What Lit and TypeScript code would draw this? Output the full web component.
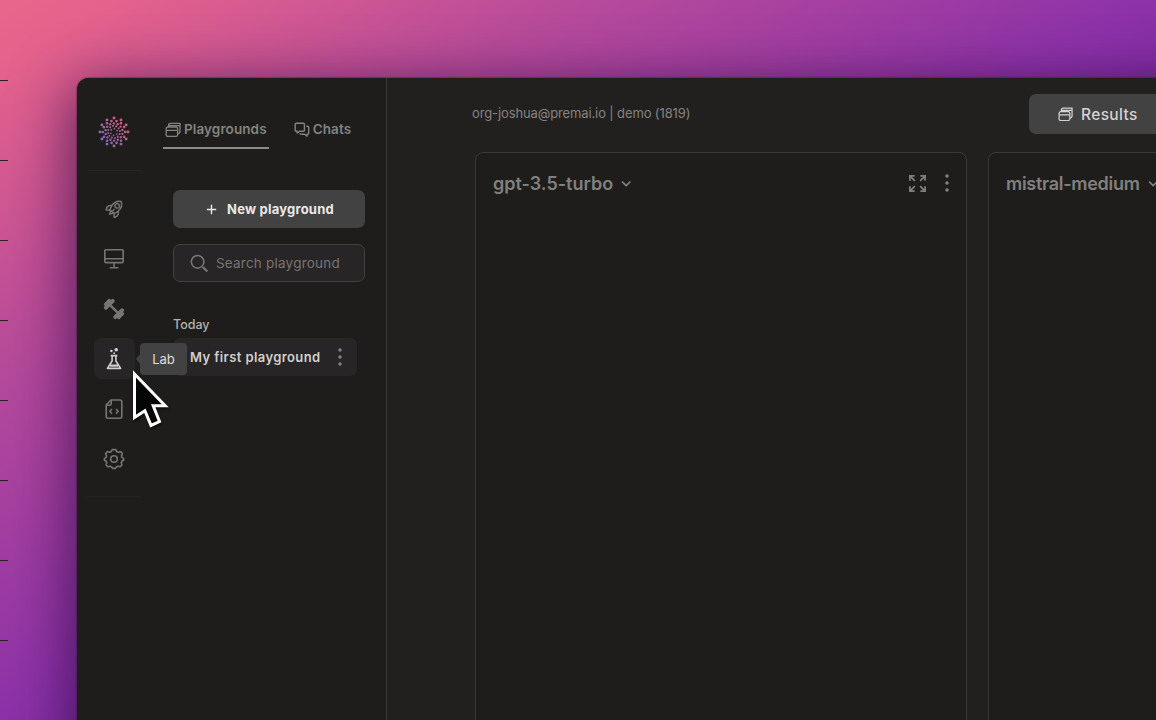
import { LitElement, html, css, svg } from "lit";
import { customElement } from "lit/decorators.js";

const windows = svg`<g stroke-width="1.3"><path d="M3.6 4.8V3.2C3.6 2 4.3 1.3 5.5 1.3H15V9.6C15 10.8 14.3 11.6 12.8 11.6"/><rect x="1.2" y="5" width="11.4" height="9.4" rx="1.6"/><path d="M1.2 8.4H12.6M4 3.6H15"/></g>`;

const railIcons = [
  svg`<g transform="translate(0.8 -0.4) rotate(42 12 12)"><path d="M12 1.6C16 3.6 17.2 7.4 16.6 11.4L15.2 16.4H8.8L7.4 11.4C6.8 7.4 8 3.6 12 1.6Z"/><circle cx="12" cy="8" r="2.4"/><path d="M7.6 11L5.2 13.8C4.4 15.6 4.7 18 6.2 19.4L9.2 16.4M16.4 11L18.8 13.8C19.6 15.6 19.3 18 17.8 19.4L14.8 16.4M10 16.4L12 20.4L14 16.4M12 12.4V15.4"/></g>`,
  svg`<rect x="2.8" y="2.8" width="18.4" height="12.8" rx="1"/><path d="M3 11.7H21.2M12 16V20.6M7.8 20.8H16.4"/>`,
  svg`<g transform="rotate(45 12 12)" fill="currentColor" stroke="none"><rect x="5" y="10.7" width="14" height="2.5"/><rect x="3.4" y="5.2" width="3.9" height="13.6" rx="1.8"/><rect x="16.7" y="5.2" width="3.9" height="13.6" rx="1.8"/><rect x="1" y="7.7" width="3.5" height="8.6" rx="1.6"/><rect x="19.5" y="7.7" width="3.5" height="8.6" rx="1.6"/></g>`,
  svg`<path d="M8.7 8.6H15.3M10.1 8.6V14L5.4 21.4H18.6L13.9 14V8.6"/><path d="M8 18.6H16" stroke-width="2.2"/><g fill="currentColor" stroke="none"><circle cx="14.2" cy="2.8" r="1.8"/><circle cx="9.4" cy="4" r="1.3"/><circle cx="12.2" cy="6.2" r=".9"/></g>`,
  svg`<path d="M9 3H18C19 3 19.8 3.6 19.8 4.7V19.6C19.8 20.6 19.1 21.3 18 21.3H6C4.9 21.3 4.2 20.6 4.2 19.6V8Z"/><path d="M4.2 8.3H7.5C8.6 8.3 9.2 7.7 9.2 6.7V3M10 12L7.8 14.3L10 16.6M14 12L16.2 14.3L14 16.6"/>`,
  svg`<path d="M10.2 2.6H13.8L14.8 4.7L16.4 5.2L18.8 4.6L20.4 6.8L19.4 9.1L19.8 10.4L21.6 11.4V13.2L19.8 14.2L19.3 15.6L19.9 18L18 19.8L15.7 19.3L14.4 19.9L13.2 21.4H10.8L9.6 19.9L8.3 19.3L6 19.8L4.1 18L4.7 15.6L4.2 14.2L2.4 13.2V11.4L4.2 10.4L4.6 9.1L3.6 6.8L5.2 4.6L7.6 5.2L9.2 4.7Z"/><circle cx="12" cy="12" r="3.3"/>`,
];

@customElement("app-root")
export class AppRoot extends LitElement {
  static styles = css`
    :host { display: block; height: 720px; overflow: hidden; font-family: Inter, "Liberation Sans", sans-serif; color: #8a8886; }
    * { box-sizing: border-box; }
    svg { display: block; flex: none; fill: none; stroke: currentColor; stroke-width: 1.4; stroke-linejoin: round; }
    .stage { position: relative; height: 720px; padding: 78px 0 0 77px; overflow: hidden;
      background: linear-gradient(to bottom right, #e9668b 0%, #e4628c 5%, #ba4c9a 24%, #8d32a9 50%, #6d2199 68%); }
    .ticks { position: absolute; left: 0; top: 0; width: 8px; padding-top: 1px; }
    .tick { height: 1px; margin-top: 79px; background: #2b2024; }
    .window { display: flex; width: 1300px; height: 900px; border-radius: 12px 0 0 0; background: #21201e; box-shadow: 0 14px 60px 6px rgba(28, 4, 50, .62), 0 0 2px #281a24; }
    .sidebar { display: flex; flex: none; width: 310px; border-right: 1px solid #393836; border-radius: 12px 0 0 0; background: #1e1d1b; }
    .rail { width: 74px; display: flex; flex-direction: column; align-items: center; padding-top: 38px; }
    .rail svg { stroke-width: 1.6; }
    .rail .logo { stroke: none; }
    .sep { width: 54px; height: 1px; background: #242321; margin-top: 22px; }
    .nav { display: flex; flex-direction: column; gap: 9px; padding-top: 17px; }
    .tile { width: 41px; height: 41px; display: grid; place-items: center; border-radius: 7px; color: #777573; }
    .tile.active { background: #272526; color: #d2d0cf; }
    .last { margin-top: 17px; }
    .panel { flex: 1; padding: 39px 21px 0 12px; }
    .tabs { display: flex; gap: 23px; height: 32px; }
    .tab { display: flex; gap: 3px; height: 32px; padding: 0 2px; align-items: flex-start; font-size: 13.5px; font-weight: 600; line-height: 25px; letter-spacing: .1px; white-space: nowrap; color: #858381; }
    .tab svg { margin-top: 5px; }
    .tab.on { border-bottom: 2px solid #8d8b88; }
    .content { padding: 41px 0 0 10px; }
    .new { height: 38px; display: flex; align-items: center; gap: 10px; padding-left: 33px; background: #424242; border-radius: 7px; color: #ebe9e8; font-size: 13px; font-weight: 700; letter-spacing: .22px; white-space: nowrap; }
    .search { height: 38px; margin-top: 16px; display: flex; align-items: center; gap: 7px; padding-left: 16px; border: 1px solid #424140; border-radius: 7px; background: #272526; font-size: 13.5px; letter-spacing: .21px; color: #777573; white-space: nowrap; }
    .today { margin-top: 35px; font-size: 12.5px; line-height: 16px; font-weight: 500; color: #b4b2b0; }
    .item { margin: 5px 8px 0 0; height: 38px; display: flex; align-items: center; justify-content: space-between; padding: 0 14px 0 17px; background: #272526; border-radius: 7px; color: #d2d0cf; font-size: 13px; font-weight: 600; letter-spacing: .41px; white-space: nowrap; }
    .dots { fill: currentColor; stroke: none; color: #858381; }
    .main { flex: 1; }
    .header { height: 74px; padding: 16px 0 0 85px; display: flex; color: #858381; }
    .org { width: 557px; font-size: 13px; line-height: 39px; letter-spacing: -.12px; }
    .results { height: 40px; flex: 1; display: flex; align-items: center; gap: 8px; padding-left: 29px; border-radius: 7px; background: #424242; color: #d5d3d2; font-size: 15.5px; font-weight: 500; letter-spacing: .35px; }
    .cards { display: flex; gap: 21px; padding-left: 88px; }
    .card { width: 492px; height: 700px; flex: none; border: 1px solid #3a3937; border-radius: 8px; background: #1e1d1b; display: flex; align-items: flex-start; padding: 18px 16px 0 17px; color: #82807e; }
    .model { font-size: 18px; line-height: 25px; font-weight: 600; white-space: nowrap; }
    .model.tight { letter-spacing: -.28px; }
    .chev { margin: 8px 0 0 7px; }
    .tools { display: flex; gap: 17px; margin: 2px 0 0 auto; align-items: center; }
    .tip { position: absolute; left: 140px; top: 343px; width: 47px; height: 32px; border-radius: 4px; background: #424242; color: #e0dedd; font-size: 13px; line-height: 32px; text-align: center; }
    .tip::before { content: ""; position: absolute; left: -4px; top: 11px; border: 5px solid transparent; border-left: 0; border-right: 4px solid #424242; }
    .cursor { position: absolute; left: 128px; top: 365px; filter: drop-shadow(1px 2px 1px rgba(0,0,0,.55)); }
  `;

  private logo() {
    const out = [];
    const radii = [3.4, 6, 8.6, 11.2, 14];
    for (let r = 0; r < radii.length; r++) {
      const n = [6, 12, 14, 14, 12][r];
      for (let i = 0; i < n; i++) {
        const a = (i / n) * Math.PI * 2 + (r - 4) * 0.23 - Math.PI / 2;
        const x = 16 + Math.cos(a) * radii[r], y = 16 + Math.sin(a) * radii[r];
        const t = Math.max(0, Math.min(1, (x - y + 20) / 40));
        out.push(svg`<circle cx=${x} cy=${y} r=${0.85 + r * 0.16} fill=${`rgb(${130 + t * 75},${105 - t * 13},${185 - t * 65})`} />`);
      }
    }
    return html`<svg class="logo" width="32" height="32">${out}</svg>`;
  }

  private dots() {
    return html`<svg class="dots" width="6" height="20"><circle cx="3" cy="3" r="1.7"/><circle cx="3" cy="10" r="1.7"/><circle cx="3" cy="17" r="1.7"/></svg>`;
  }

  private card(name: string, tight: boolean) {
    return html`<section class="card">
      <span class="model ${tight ? "tight" : ""}">${name}</span>
      <svg class="chev" width="12" height="10"><path d="M2 2.5L6.2 6.7L10.4 2.5" stroke-width="1.7"/></svg>
      <div class="tools">
        <svg width="19" height="19" viewBox="0 0 20 20"><path stroke-width="1.8" stroke-linejoin="miter" d="M2 7V2H7M2 2L7.2 7.2M13 2H18V7M18 2L12.8 7.2M2 13V18H7M2 18L7.2 12.8M13 18H18V13M18 18L12.8 12.8"/></svg>
        ${this.dots()}
      </div>
    </section>`;
  }

  render() {
    return html`<div class="stage">
      <div class="ticks">${Array.from({ length: 8 }, () => html`<div class="tick"></div>`)}</div>
      <div class="window">
        <aside class="sidebar">
          <div class="rail">
            ${this.logo()}
            <div class="sep"></div>
            <nav class="nav">${railIcons.map((p, i) => html`<div class="tile ${i === 3 ? "active" : ""}"><svg width=${i === 0 ? 22 : 24} height=${i === 0 ? 22 : 24} viewBox="0 0 24 24">${p}</svg></div>`)}</nav>
            <div class="sep last"></div>
          </div>
          <div class="panel">
            <div class="tabs">
              <div class="tab on"><svg width="16" height="16">${windows}</svg><span>Playgrounds</span></div>
              <div class="tab"><svg width="16" height="16"><path d="M2.2 1.2H9.4C10 1.2 10.4 1.6 10.4 2.2V8.2C10.4 8.8 10 9.2 9.4 9.2H5.5L3.2 11V9.2H2.2C1.6 9.2 1.2 8.8 1.2 8.2V2.2C1.2 1.6 1.6 1.2 2.2 1.2Z"/><path d="M12.3 4.2H13.6C14.3 4.2 14.7 4.6 14.7 5.2V11.2C14.7 11.8 14.3 12.2 13.7 12.2H13V14.2L10.6 12.2H7C6.4 12.2 6 11.8 6 11.2"/></svg><span>Chats</span></div>
            </div>
            <div class="content">
              <div class="new"><svg width="11" height="11"><path d="M5.5 .8V10.2M.8 5.5H10.2"/></svg><span>New playground</span></div>
              <div class="search"><svg width="19" height="19"><circle cx="7.6" cy="7.8" r="6.3" stroke-width="1.6"/><path d="M12.8 13L17.3 17.5" stroke-width="2.3"/></svg><span>Search playground</span></div>
              <div class="today">Today</div>
              <div class="item"><span>My first playground</span>${this.dots()}</div>
            </div>
          </div>
        </aside>
        <main class="main">
          <header class="header">
            <div class="org">org-joshua@premai.io | demo (1819)</div>
            <div class="results"><svg width="15" height="15" viewBox="0 0 16 16">${windows}</svg><span>Results</span></div>
          </header>
          <div class="cards">${this.card("gpt-3.5-turbo", false)}${this.card("mistral-medium", true)}</div>
        </main>
      </div>
      <div class="tip">Lab</div>
      <svg class="cursor" width="46" height="68"><path d="M6.5 9V52.5L16.9 45.7L23 60.4L31.5 56.5L25.2 40.8H37.2Z" fill="#050505" stroke="#fff" stroke-width="3" stroke-linejoin="miter"/></svg>
    </div>`;
  }
}
